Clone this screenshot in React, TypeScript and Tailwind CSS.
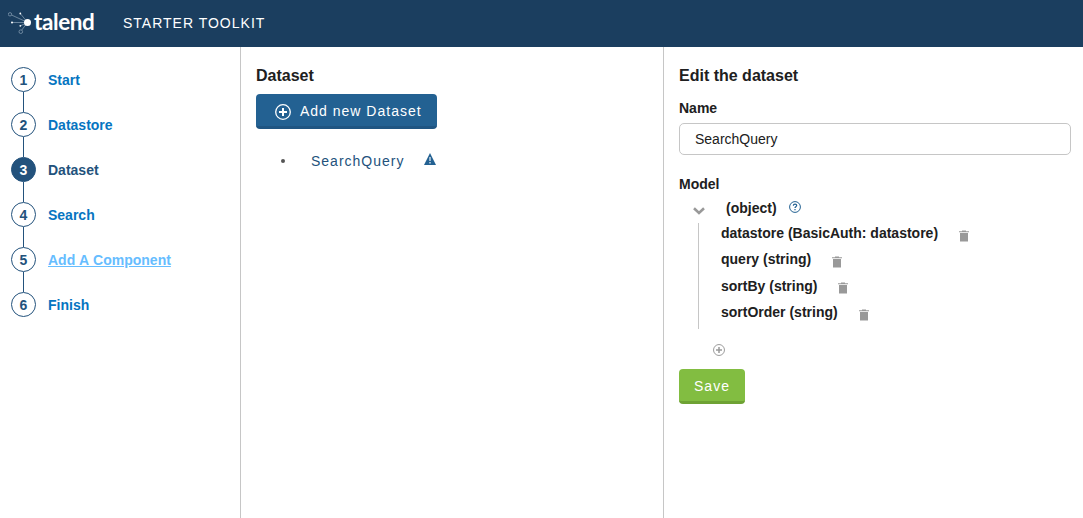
import React from "react";

type Step = { label: string; state?: "active" | "hover" };

const steps: Step[] = [
  { label: "Start" },
  { label: "Datastore" },
  { label: "Dataset", state: "active" },
  { label: "Search" },
  { label: "Add A Component", state: "hover" },
  { label: "Finish" },
];

const fields = [
  "datastore (BasicAuth: datastore)",
  "query (string)",
  "sortBy (string)",
  "sortOrder (string)",
];

function PlusCircle({ className }: { className: string }) {
  return (
    <svg viewBox="0 0 16 16" className={className} fill="none" stroke="currentColor">
      <circle cx="8" cy="8" r="7.3" strokeWidth="1.3" />
      <path d="M8 4v8M4 8h8" strokeWidth="2" />
    </svg>
  );
}

function Trash() {
  return (
    <svg viewBox="0 0 10 12" className="h-3 w-2.5 shrink-0 text-[#999]" fill="currentColor">
      <path d="M3 0.4h4v.8h3v1.1H0V1.2h3z" />
      <path d="M1 3h8v8.5H1z" />
    </svg>
  );
}

function Logo() {
  return (
    <div className="flex h-full w-[90px] items-start">
      <svg viewBox="0 0 26 26" className="mt-[10px] h-[26px] w-[26px] shrink-0" fill="none">
        <g stroke="#8da3b7" strokeWidth="0.7">
          <path d="M3.5 5 19.5 12.4M12.5 3.8l7 8.6M4 12.5h15.5M12.5 15.8l7-3.4M13.8 20l5.7-7.6" />
          <circle cx="2" cy="4.3" r="1.7" />
          <circle cx="12.8" cy="21.7" r="1.8" />
        </g>
        <g fill="#fff">
          <circle cx="12.3" cy="3.5" r="0.9" />
          <circle cx="4" cy="12.5" r="1" />
          <circle cx="12.3" cy="15.8" r="0.9" />
          <circle cx="19.5" cy="12.4" r="3.5" />
        </g>
      </svg>
      <span className="mt-[7px] font-[Lato,sans-serif] text-[22.5px] leading-[30px] font-bold tracking-[-0.4px]">
        talend
      </span>
    </div>
  );
}

export default function App() {
  return (
    <div className="flex h-[518px] w-full flex-col overflow-hidden bg-white font-['Liberation_Sans',Arial,sans-serif] text-sm text-[#202020]">
      <header className="flex h-[47px] shrink-0 items-center bg-[#1b3e5f] pl-2 text-white">
        <Logo />
        <span className="mb-0.5 ml-[25px] tracking-[1px]">STARTER TOOLKIT</span>
      </header>
      <main className="flex min-h-0 flex-1">
        <nav className="w-[241px] shrink-0 border-r border-[#c6c6c6] pt-5 pl-[11px]">
          <ol>
            {steps.map((step, i) => (
              <li key={step.label} className="flex h-[45px] gap-3">
                <div className="flex flex-col items-center">
                  <span
                    className={
                      step.state === "active"
                        ? "flex h-[25px] w-[25px] shrink-0 items-center justify-center rounded-full border border-[#23527c] bg-[#23527c] font-bold text-white"
                        : "flex h-[25px] w-[25px] shrink-0 items-center justify-center rounded-full border border-[#23527c] font-bold text-[#23527c]"
                    }
                  >
                    {i + 1}
                  </span>
                  {i < steps.length - 1 && <span className="w-px flex-1 bg-[#23527c]" />}
                </div>
                <a
                  className={
                    step.state === "active"
                      ? "h-[25px] leading-[26px] font-bold text-[#23527c]"
                      : step.state === "hover"
                        ? "h-[25px] leading-[26px] font-bold text-[#66bdff] underline [font-kerning:none]"
                        : "h-[25px] leading-[26px] font-bold text-[#0675c1]"
                  }
                >
                  {step.label}
                </a>
              </li>
            ))}
          </ol>
        </nav>

        <section className="w-[423px] shrink-0 border-r border-[#c6c6c6] pt-[19px] pl-[15px]">
          <h2 className="text-base leading-5 font-bold">Dataset</h2>
          <button className="mt-2 flex h-[35px] w-[181px] items-center rounded border-b-[3px] border-[#1f5582] bg-[#236192] pl-[19px] tracking-[1px] text-white">
            <PlusCircle className="mt-[3px] mr-[9px] h-4 w-4" />
            <span className="mt-0.5">Add new Dataset</span>
          </button>
          <ul className="mt-[22px]">
            <li className="flex h-5 items-center pl-[25px]">
              <span className="h-1 w-1 rounded-full bg-[#555]" />
              <a className="ml-[26px] tracking-[1px] text-[#23527c]">SearchQuery</a>
              <svg viewBox="0 0 12 12" className="mb-1 ml-5 h-3 w-3">
                <path d="M6 0 12 12H0z" fill="#236192" />
                <path d="M6 4v4M6 9v1.5" stroke="#fff" strokeOpacity="0.8" strokeWidth="1.4" />
              </svg>
            </li>
          </ul>
        </section>

        <section className="min-w-0 flex-1 pt-[19px] pr-3 pl-[15px]">
          <h2 className="text-base leading-5 font-bold">Edit the dataset</h2>
          <label className="mt-3 block leading-5 font-bold">Name</label>
          <input
            className="mt-[5px] block h-8 w-full rounded-[5px] border border-[#c6c6c6] px-[15px] outline-none"
            defaultValue="SearchQuery"
          />
          <div className="mt-[19px] leading-5 font-bold">Model</div>
          <div className="mt-1 flex h-5 items-center pl-[14px] font-bold">
            <svg viewBox="0 0 12 8" className="mt-1.5 h-2 w-3" fill="none" stroke="#999" strokeWidth="2.6">
              <path d="m1 1.3 5 4.6 5-4.6" />
            </svg>
            <span className="ml-[21px]">(object)</span>
            <svg viewBox="0 0 12 12" className="mb-0.5 ml-3 h-3 w-3" fill="none" stroke="#236192">
              <circle cx="6" cy="6" r="5.4" />
              <path d="M4.3 4.7C4.4 2.5 7.8 2.6 7.7 4.5 7.6 5.7 6 5.7 6 7M6 8v1.3" strokeWidth="1.2" />
            </svg>
          </div>
          <ul className="mt-[5px] ml-[19px] h-[106px] border-l border-[#c6c6c6] pl-[22px]">
            {fields.map((field) => (
              <li key={field} className="flex h-[26.4px] items-start font-bold">
                <span className="leading-5">{field}</span>
                <span className="mt-[6.5px] ml-[21px]">
                  <Trash />
                </span>
              </li>
            ))}
          </ul>
          <PlusCircle className="mt-[15px] ml-[34px] h-3 w-3 text-[#999]" />
          <button className="mt-[13px] flex h-[35px] w-[66px] items-center justify-center rounded border-b-[3px] border-[#6ea234] bg-[#82bd41] tracking-[1px] text-white">
            <span className="mt-0.5">Save</span>
          </button>
        </section>
      </main>
    </div>
  );
}
